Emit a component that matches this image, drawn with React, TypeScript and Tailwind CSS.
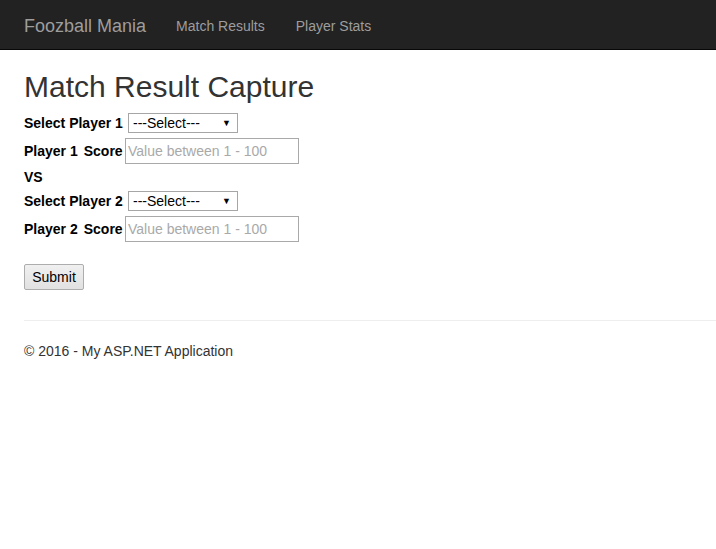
import React from "react";

const font = { fontFamily: '"Liberation Sans", Arial, sans-serif' };

function PlayerSelect({ id }: { id: string }) {
    return (
        <div className="relative w-[110px] h-[20px]">
            <select
                id={id}
                defaultValue=""
                className="appearance-none w-full h-full border border-[#a6a6a6] bg-white pl-[4px] text-[14px] leading-[18px] text-black outline-none"
            >
                <option value="">---Select---</option>
            </select>
            <span className="pointer-events-none absolute right-[7px] top-[4px] text-[9px] leading-[12px] text-black">▼</span>
        </div>
    );
}

function ScoreInput({ id }: { id: string }) {
    return (
        <input
            id={id}
            type="text"
            placeholder="Value between 1 - 100"
            className="w-[174px] h-[26px] border border-[#a9a9a9] bg-white px-[2px] text-[14px] text-black placeholder:text-[#a9a9a9] outline-none"
        />
    );
}

export default function App() {
    return (
        <div className="min-h-[549px] bg-white text-[#333] text-[14px]" style={font}>
            {/* Navbar */}
            <nav className="h-[50px] bg-[#222] border-b border-[#080808] flex items-center pl-[24px] pt-[3px]">
                <span className="text-[18px] text-[#9d9d9d] mr-[30px]">Foozball Mania</span>
                <a className="text-[14px] text-[#9d9d9d] mr-[31px]">Match Results</a>
                <a className="text-[14px] text-[#9d9d9d]">Player Stats</a>
            </nav>

            <div className="pl-[24px]">
                <h2 className="mt-[20px] mb-[10px] text-[30px] leading-[33px] text-[#333]">Match Result Capture</h2>

                <div className="flex flex-col">
                    <div className="flex items-center h-[20px]">
                        <label htmlFor="p1" className="font-bold text-black w-[104px]">Select Player 1</label>
                        <PlayerSelect id="p1" />
                    </div>
                    <div className="flex items-center h-[26px] mt-[5px]">
                        <label htmlFor="s1" className="font-bold text-black w-[101px]">
                            Player 1<span className="ml-[6px]">Score</span>
                        </label>
                        <ScoreInput id="s1" />
                    </div>
                    <div className="font-bold text-black h-[20px] leading-[20px] mt-[3px]">VS</div>
                    <div className="flex items-center h-[20px] mt-[4px]">
                        <label htmlFor="p2" className="font-bold text-black w-[104px]">Select Player 2</label>
                        <PlayerSelect id="p2" />
                    </div>
                    <div className="flex items-center h-[26px] mt-[5px]">
                        <label htmlFor="s2" className="font-bold text-black w-[101px]">
                            Player 2<span className="ml-[6px]">Score</span>
                        </label>
                        <ScoreInput id="s2" />
                    </div>
                </div>

                <button
                    type="button"
                    className="mt-[22px] w-[60px] h-[26px] border border-[#adadad] rounded-[2px] bg-gradient-to-b from-[#f0f0f0] to-[#e1e1e1] text-[14px] text-black"
                >
                    Submit
                </button>

                <hr className="mt-[30px] border-t border-[#eee]" />

                <footer className="pt-[20px]">
                    <p className="text-[14px] leading-[20px] text-[#333]">© 2016 - My ASP.NET Application</p>
                </footer>
            </div>
        </div>
    );
}
